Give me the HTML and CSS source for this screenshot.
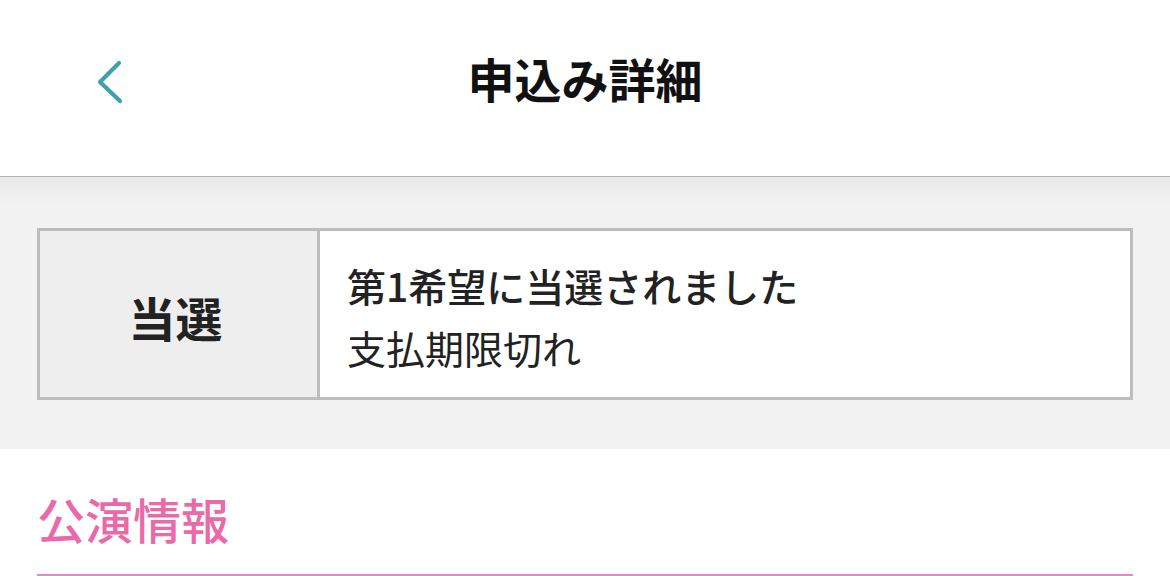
FILE: index.html
```html
<!DOCTYPE html>
<html lang="ja">
<head>
<meta charset="utf-8">
<title>申込み詳細</title>
<link rel="stylesheet" href="styles.css">
</head>
<body>
<header class="topbar">
  <div class="topbar-left">
    <a class="back" href="#" aria-label="戻る">
      <svg width="34" height="48" viewBox="0 0 34 48" aria-hidden="true">
        <polyline points="22,5 3,24 23,43" fill="none" stroke="#3ea1ab" stroke-width="4.2" stroke-linecap="round" stroke-linejoin="round"/>
      </svg>
    </a>
  </div>
  <h1 class="title">申込み詳細</h1>
  <div class="topbar-right"></div>
</header>
<section class="status-area">
  <div class="status-box">
    <div class="status-label">当選</div>
    <div class="status-detail">
      <p class="detail-main">第1希望に当選されました</p>
      <p class="detail-sub">支払期限切れ</p>
    </div>
  </div>
</section>
<section class="info">
  <h2 class="info-title">公演情報</h2>
</section>
</body>
</html>
```

FILE: styles.css
```css
* { box-sizing: border-box; }
html, body {
  margin: 0;
  padding: 0;
  background: #ffffff;
  font-family: "Noto Sans CJK JP", "Noto Sans", sans-serif;
  color: #222;
}
.topbar {
  height: 177px;
  display: grid;
  grid-template-columns: 1fr auto 1fr;
  align-items: center;
  border-bottom: 1px solid #b3b3b3;
  background: #fff;
}
.topbar-left {
  padding-left: 97px;
  display: flex;
  align-items: center;
  padding-bottom: 12px;
}
.back { display: block; line-height: 0; }
.title {
  margin: 0;
  font-size: 47px;
  font-weight: 700;
  color: #111;
  line-height: 1;
  padding-bottom: 22px;
}
.status-area {
  background: linear-gradient(#e9e9e9 0px, #f2f2f2 28px, #f2f2f2 100%);
  padding: 51px 37px 49px;
}
.status-box {
  display: grid;
  grid-template-columns: 280px 1fr;
  height: 172px;
  border: 3px solid #bdbdbd;
  background: #fff;
}
.status-label {
  background: #eeeeee;
  border-right: 3px solid #bdbdbd;
  display: flex;
  align-items: center;
  justify-content: center;
  font-size: 47px;
  font-weight: 700;
  color: #222;
  padding-top: 4px;
  padding-right: 6px;
}
.status-detail {
  display: flex;
  flex-direction: column;
  justify-content: center;
  padding-left: 27px;
  padding-top: 4px;
}
.status-detail p {
  margin: 0;
  font-size: 39px;
  line-height: 62px;
  color: #222;
}
.detail-main { font-weight: 500; }
.detail-sub { font-weight: 400; }
.info {
  padding: 34px 37px 0;
}
.info-title {
  margin: 0;
  font-size: 48px;
  line-height: 70px;
  font-weight: 500;
  color: #ea6aa9;
  padding-bottom: 21px;
  border-bottom: 2px solid #e38ac4;
}
```
